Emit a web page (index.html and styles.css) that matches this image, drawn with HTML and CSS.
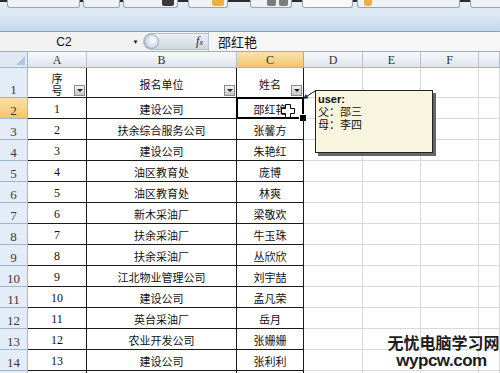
FILE: index.html
```html
<!DOCTYPE html>
<html lang="zh-CN">
<head>
  <meta charset="UTF-8">
  <title>报名表 - Excel</title>
  <link rel="stylesheet" href="styles.css">
</head>
<body>
<div class="page">

  <div class="ribbon">
    <div class="btn b1"></div>
    <div class="btn b2"></div>
    <div class="btn b3"><i class="ico dark"></i></div>
    <div class="btn b4"><i class="ico orange"></i></div>
    <div class="btn b5"><i class="ico grey"></i><i class="ico grey"></i></div>
    <div class="btn b6"></div>
    <div class="btn b7"><i class="ico orange left"></i></div>
    <div class="btn b8"></div>
  </div>

  <div class="formula-bar">
    <div class="name-box"><span class="name">C2</span><span class="drop">▼</span></div>
    <div class="fx-zone"><span class="knob"></span><span class="fx">f<small>x</small></span></div>
    <div class="formula">邵红艳</div>
  </div>

  <div class="sheet">
    <div class="corner"></div>
    <div class="ch">A</div><div class="ch">B</div><div class="ch on">C</div><div class="ch">D</div><div class="ch">E</div><div class="ch">F</div><div class="ch"></div>

    <div class="rh">1</div>
    <div class="c hd"><span class="two">序<br>号</span><span class="flt"></span></div>
    <div class="c hd">报名单位<span class="flt"></span></div>
    <div class="c hd">姓名<span class="flt"></span></div>
    <div class="g"></div><div class="g"></div><div class="g"></div><div class="g"></div>

    <div class="rh on">2</div><div class="c n">1</div><div class="c">建设公司</div><div class="c sel">邵红艳</div>
    <div class="g"></div><div class="g"></div><div class="g"></div><div class="g"></div>

    <div class="rh">3</div><div class="c n">2</div><div class="c">扶余综合服务公司</div><div class="c">张馨方</div>
    <div class="g"></div><div class="g"></div><div class="g"></div><div class="g"></div>

    <div class="rh">4</div><div class="c n">3</div><div class="c">建设公司</div><div class="c">朱艳红</div>
    <div class="g"></div><div class="g"></div><div class="g"></div><div class="g"></div>

    <div class="rh">5</div><div class="c n">4</div><div class="c">油区教育处</div><div class="c">庞博</div>
    <div class="g"></div><div class="g"></div><div class="g"></div><div class="g"></div>

    <div class="rh">6</div><div class="c n">5</div><div class="c">油区教育处</div><div class="c">林爽</div>
    <div class="g"></div><div class="g"></div><div class="g"></div><div class="g"></div>

    <div class="rh">7</div><div class="c n">6</div><div class="c">新木采油厂</div><div class="c">梁敬欢</div>
    <div class="g"></div><div class="g"></div><div class="g"></div><div class="g"></div>

    <div class="rh">8</div><div class="c n">7</div><div class="c">扶余采油厂</div><div class="c">牛玉珠</div>
    <div class="g"></div><div class="g"></div><div class="g"></div><div class="g"></div>

    <div class="rh">9</div><div class="c n">8</div><div class="c">扶余采油厂</div><div class="c">丛欣欣</div>
    <div class="g"></div><div class="g"></div><div class="g"></div><div class="g"></div>

    <div class="rh">10</div><div class="c n">9</div><div class="c">江北物业管理公司</div><div class="c">刘宇喆</div>
    <div class="g"></div><div class="g"></div><div class="g"></div><div class="g"></div>

    <div class="rh">11</div><div class="c n">10</div><div class="c">建设公司</div><div class="c">孟凡荣</div>
    <div class="g"></div><div class="g"></div><div class="g"></div><div class="g"></div>

    <div class="rh">12</div><div class="c n">11</div><div class="c">英台采油厂</div><div class="c">岳月</div>
    <div class="g"></div><div class="g"></div><div class="g"></div><div class="g"></div>

    <div class="rh">13</div><div class="c n">12</div><div class="c">农业开发公司</div><div class="c">张姗姗</div>
    <div class="g"></div><div class="g"></div><div class="g"></div><div class="g"></div>

    <div class="rh">14</div><div class="c n">13</div><div class="c">建设公司</div><div class="c">张利利</div>
    <div class="g"></div><div class="g"></div><div class="g"></div><div class="g"></div>

    <!-- row 15, only its top edge shows -->
    <div class="rh"></div><div class="c n"></div><div class="c"></div><div class="c"></div>
    <div class="g"></div><div class="g"></div><div class="g"></div><div class="g"></div>
  </div>

  <!-- comment popup on C2 -->
  <svg class="arrow" width="18" height="14" viewBox="0 0 18 14">
    <line x1="5" y1="9.5" x2="15" y2="3" stroke="#111" stroke-width="1"/>
    <polygon points="3,11 8.6,10.3 5.8,6.1" fill="#1e2a44"/>
  </svg>
  <div class="comment">
    <b>user:</b><br>
    父：邵三<br>
    母：李四
  </div>

  <svg class="cursor" width="14" height="14" viewBox="0 0 14 14">
    <path d="M4.5 0.5 H9.5 V4.5 H13.5 V9.5 H9.5 V13.5 H4.5 V9.5 H0.5 V4.5 H4.5 Z" fill="#fff" stroke="#000" stroke-width="1"/>
  </svg>

  <div class="wm">
    <div class="wm1">无忧电脑学习网</div>
    <div class="wm2">wypcw.com</div>
  </div>

</div>
</body>
</html>
```

FILE: styles.css
```css
* {
  box-sizing: border-box;
  margin: 0;
  padding: 0;
}

body {
  width: 500px;
  height: 373px;
  overflow: hidden;
  background: #fff;
  color: #111;
  font-family: "Noto Sans CJK SC", sans-serif;
}

.page {
  position: relative;
  width: 500px;
  height: 373px;
  overflow: hidden;
}

/* ribbon bottom */
.ribbon {
  height: 32px;
  display: flex;
  align-items: flex-start;
  padding-left: 7px;
  background: linear-gradient(#2c2c2c 0, #2c2c2c 2px, #e4edf8 2px, #dae6f4 16px, #c6d8ee 31px);
  border-bottom: 1px solid #8d9fb8;
}

.btn {
  flex: none;
  height: 8px;
  display: flex;
  justify-content: flex-end;
  gap: 3px;
  padding: 0 3px;
  background: #eef1f5;
  border: 1px solid #98a4b4;
  border-top: none;
  border-radius: 0 0 3px 3px;
}

.b1 { width: 73px; }
.b2 { width: 37px; margin-left: 3px; }
.b3 { width: 55px; margin-left: 3px; }
.b4 { width: 40px; margin-left: 10px; }
.b5 { width: 42px; margin-left: 22px; }
.b6 { width: 51px; margin-left: 10px; background: #f8f8f8; }
.b7 { width: 103px; margin-left: 4px; justify-content: flex-start; }
.b8 { width: 40px; margin-left: 10px; }

.ico {
  width: 12px;
  height: 6px;
  border-radius: 0 0 2px 2px;
}

.ico.dark { background: #3a3a3a; }
.ico.orange { background: #f0b040; }
.ico.grey { background: #7d7d7d; width: 9px; }
.ico.left { margin-left: 3px; width: 8px; }

/* formula bar */
.formula-bar {
  height: 20px;
  display: flex;
  background: #f2f2f2;
  border-bottom: 1px solid #a3afbf;
}

.name-box {
  width: 143px;
  display: flex;
  align-items: center;
  font: 12px "Liberation Sans", sans-serif;
}

.name {
  width: 128px;
  text-align: center;
}

.drop {
  width: 15px;
  font-size: 6px;
  text-align: center;
}

.fx-zone {
  width: 65px;
  height: 17px;
  margin-top: 1px;
  display: flex;
  align-items: center;
  justify-content: space-between;
  background: linear-gradient(#eef1f5, #cdd6e1);
  border: 1px solid #b4bfcc;
  border-right: none;
  border-radius: 9px 0 0 9px;
}

.knob {
  width: 15px;
  height: 15px;
  border-radius: 50%;
  background: radial-gradient(circle at 60% 40%, #fff, #b6c3d2);
  border: 1px solid #97a6b8;
}

.fx {
  font: italic 12px "Liberation Serif", serif;
  padding-right: 5px;
  color: #222;
}

.fx small {
  font-size: 8px;
}

.formula {
  flex: 1;
  background: #f6f6f6;
  border-left: 1px solid #b9c2cd;
  padding-left: 9px;
  font-size: 13px;
  line-height: 19px;
}

/* worksheet */
.sheet {
  display: grid;
  grid-template-columns: 28px 59px 150px 67px 59px 58px 58px 21px;
  grid-template-rows: 16px 30px repeat(14, 21px);
}

.corner {
  position: relative;
  background: #dfe8f3;
  border-right: 1px solid #9eb6ce;
  border-bottom: 1px solid #9eb6ce;
}

.corner::after {
  content: "";
  position: absolute;
  right: 2px;
  bottom: 2px;
  border-left: 9px solid transparent;
  border-bottom: 9px solid #b3c5db;
}

.ch {
  display: flex;
  justify-content: center;
  align-items: flex-end;
  padding-bottom: 1px;
  background: linear-gradient(#f7f9fc, #dee4ed);
  border-right: 1px solid #b4c2d3;
  border-bottom: 1px solid #9eb6ce;
  font: 12px/12px "Liberation Serif", serif;
  color: #333;
}

.ch.on {
  background: linear-gradient(#fbe3b0, #f3c46c);
  border-right-color: #dba550;
}

.rh {
  display: flex;
  justify-content: center;
  align-items: flex-end;
  padding-bottom: 1px;
  background: #e4ecf7;
  border-right: 1px solid #9eb6ce;
  border-bottom: 1px solid #9eb6ce;
  font: 13px/13px "Liberation Serif", serif;
  color: #3a3a3a;
}

.rh.on {
  background: linear-gradient(#fbe0a8, #f4c56a);
}

.c {
  position: relative;
  display: flex;
  align-items: center;
  justify-content: center;
  padding-top: 2px;
  border-right: 1px solid #1a1a1a;
  border-bottom: 1px solid #1a1a1a;
  font-size: 11px;
  line-height: 12px;
  white-space: nowrap;
}

.c.hd {
  padding-top: 3px;
}

.n {
  font: 12px "Liberation Serif", serif;
}

.two {
  line-height: 12px;
  text-align: center;
}

.g {
  border-right: 1px solid #d8d8d8;
  border-bottom: 1px solid #d8d8d8;
}

/* autofilter buttons */
.flt {
  position: absolute;
  right: 1px;
  bottom: 1px;
  width: 11px;
  height: 11px;
  display: flex;
  align-items: center;
  justify-content: center;
  background: linear-gradient(#f4f4f4, #c6c6c6);
  border: 1px solid #8a8a8a;
}

.flt::after {
  content: "";
  border-left: 3px solid transparent;
  border-right: 3px solid transparent;
  border-top: 3px solid #222;
}

/* active cell */
.sel::before {
  content: "";
  position: absolute;
  left: -1px;
  top: -1px;
  right: -1px;
  bottom: -1px;
  border: 2px solid #000;
}

.sel::after {
  content: "";
  position: absolute;
  right: -4px;
  bottom: -4px;
  width: 6px;
  height: 6px;
  background: #000;
  border: 1px solid #fff;
}

/* comment */
.arrow {
  position: absolute;
  left: 300px;
  top: 88px;
}

.comment {
  position: absolute;
  left: 315px;
  top: 90px;
  width: 118px;
  height: 63px;
  padding: 1px 0 0 2px;
  background: #f7f5de;
  border: 1px solid #222;
  box-shadow: 3px 3px 0 #666;
  font-size: 11px;
  line-height: 13px;
}

.comment b {
  font: bold 11px "Liberation Sans", sans-serif;
}

.cursor {
  position: absolute;
  left: 281px;
  top: 104px;
}

/* watermark */
.wm {
  position: absolute;
  left: 387px;
  top: 333px;
  width: 113px;
  text-align: center;
  color: #1c1c1c;
  font-weight: bold;
  text-shadow: 0 0 2px #fff, 0 0 2px #fff;
}

.wm1 {
  font-size: 16px;
  line-height: 19px;
}

.wm2 {
  font: bold 17px/18px "Liberation Sans", sans-serif;
  letter-spacing: -0.5px;
  margin-left: -4px;
}
```
